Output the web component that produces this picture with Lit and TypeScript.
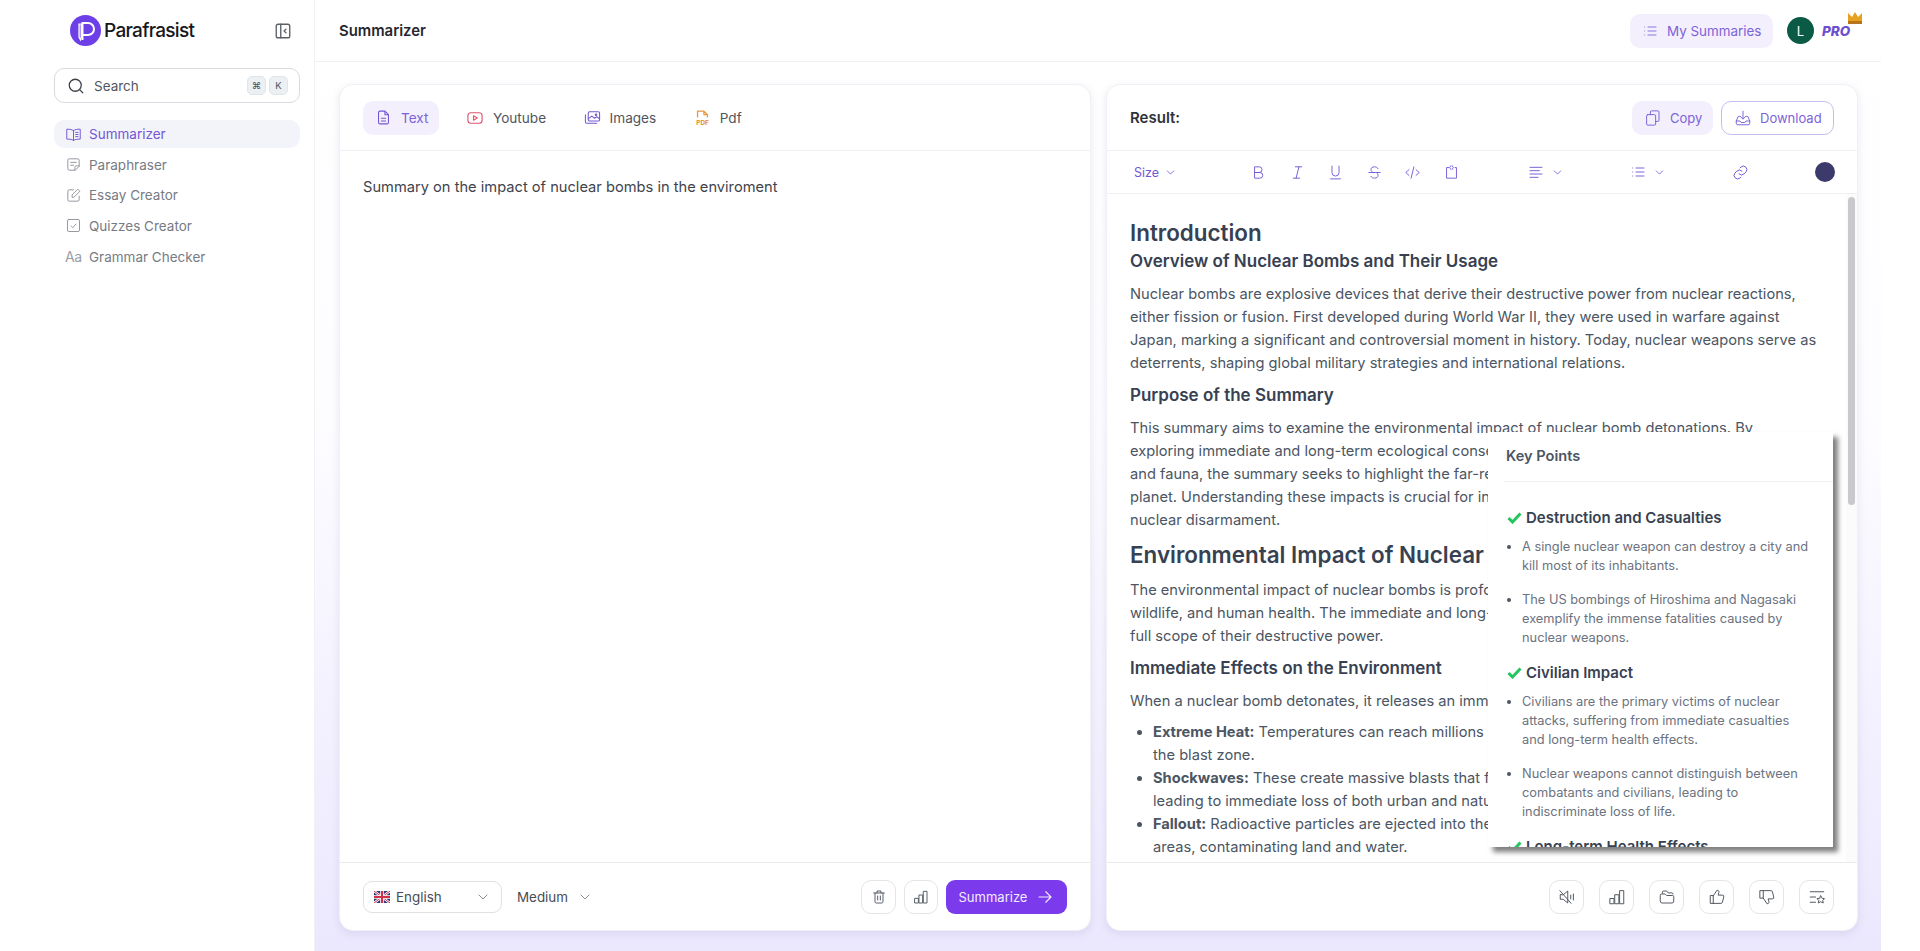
import { LitElement, html, css, svg } from "lit";
import { customElement, state } from "lit/decorators.js";

// all line icons share one 24x24 stroke box
const ico = (body: unknown, size = 16, sw = 1.5) => html`<svg class="ico" width=${size} height=${size} viewBox="0 0 24 24" fill="none" stroke="currentColor" stroke-width=${sw} stroke-linecap="round" stroke-linejoin="round">${body}</svg>`;

const icons = {
  panel: svg`<rect x="3" y="3" width="18" height="18" rx="2.5"/><path d="M9 3v18M16 9.5 13.5 12l2.5 2.5"/>`,
  search: svg`<circle cx="11" cy="11" r="8"/><path d="m21 21-4.2-4.2"/>`,
  book: svg`<path d="M12 6.5C10 5 7 4.5 2.5 4.5v14c4.500 0 7.500.5 9.500 2 2-1.500 5-2 9.500-2v-14C17 4.500 14 5 12 6.500zM12 6.500v14M15 9h3.500M15 12h3.500M15 15h3.500"/>`,
  note: svg`<path d="M20 14V6a2 2 0 0 0-2-2H6a2 2 0 0 0-2 2v12a2 2 0 0 0 2 2h8zM14 20v-4a2 2 0 0 1 2-2h4M8 9h8M8 13h4"/>`,
  edit: svg`<path d="M20 13v5a2 2 0 0 1-2 2H6a2 2 0 0 1-2-2V6a2 2 0 0 1 2-2h6M10 14v-3l8-8 3 3-8 8z"/>`,
  check: svg`<rect x="3.500" y="3.500" width="17" height="17" rx="2"/><path d="m8.500 12.500 2.500 2.500 4.500-5"/>`,
  list: svg`<path d="M9 6h12M9 12h12M9 18h12M4 6h.01M4 12h.01M4 18h.01"/>`,
  doc: svg`<path d="M14 3H7a2 2 0 0 0-2 2v14a2 2 0 0 0 2 2h10a2 2 0 0 0 2-2V8zM14 3v5h5M9 13h6M9 17h6"/>`,
  video: svg`<rect x="2.500" y="5" width="19" height="14" rx="4"/><path d="m10 9 5 3-5 3z"/>`,
  image: svg`<rect x="6" y="4" width="16" height="13" rx="2"/><path d="M2 8v10a2 2 0 0 0 2 2h14M6 14l5-4 4 3 3-2 4 3"/><circle cx="17" cy="8" r="1"/>`,
  copy: svg`<rect x="3.500" y="7.500" width="12" height="14" rx="1.500"/><path d="M8.500 7.500V4a1.500 1.500 0 0 1 1.500-1.500h8.500A1.500 1.500 0 0 1 20 4v11a1.500 1.500 0 0 1-1.500 1.500h-3"/>`,
  download: svg`<path d="M12 3v10M8 9.500l4 4 4-4M7 10H5.500L3 16v3a2 2 0 0 0 2 2h14a2 2 0 0 0 2-2v-3l-2.500-6H17M3 16h5l1.500 2h5l1.500-2h5"/>`,
  bold: svg`<path d="M7 4h6a4 4 0 0 1 0 8H7zM7 12h7a4 4 0 0 1 0 8H7z"/>`,
  italic: svg`<path d="M9 4h9M6 20h9M14 4l-4 16"/>`,
  underline: svg`<path d="M7 3v9a5 5 0 0 0 10 0V3M5 21h14"/>`,
  strike: svg`<path d="M4 12h16M17 6.500C16 4.800 14.300 4 12 4 9 4 7 5.500 7 8c0 1.500.8 3 3 4M7 17.500C8 19.200 9.700 20 12 20c3 0 5-1.500 5-4 0-1.200-.4-2.500-1.500-3.500"/>`,
  code: svg`<path d="m7 8-4.500 4L7 16M17 8l4.500 4-4.500 4M14 4l-4 16"/>`,
  block: svg`<path d="M8 5H5v15h14V5h-2M11 2.500 9.500 5 11 7.500M13 2.500 14.500 5 13 7.500"/>`,
  align: svg`<path d="M3 5h18M3 10h14M3 15h18M3 20h12"/>`,
  link: svg`<path d="M10 14a5 5 0 0 0 7 0l3-3a5 5 0 0 0-7-7l-1.500 1.500M14 10a5 5 0 0 0-7 0l-3 3a5 5 0 0 0 7 7l1.500-1.500"/>`,
  trash: svg`<path d="M4 6h16M9 6V3h6v3M6 6v13a2 2 0 0 0 2 2h8a2 2 0 0 0 2-2V6M10 10.500v6M14 10.500v6"/>`,
  chart: svg`<rect x="3" y="14" width="5" height="7"/><rect x="9.500" y="9" width="5" height="12"/><rect x="16" y="3.500" width="5" height="17.500"/>`,
  arrow: svg`<path d="M4 12h16M13 5l7 7-7 7"/>`,
  chev: svg`<path d="m6 9 6 6 6-6"/>`,
  mute: svg`<path d="M3 9v6h4l6 5V4L7 9zM2.500 3.500l15 17M17 9.500v5M20.500 8v8"/>`,
  folder: svg`<path d="M6 7V5.500A1.500 1.500 0 0 1 7.500 4h4l2 2.500h5A1.500 1.500 0 0 1 20 8M3 9.500A1.500 1.500 0 0 1 4.500 8h5l2 2h8A1.500 1.500 0 0 1 21 11.500v6A2.500 2.500 0 0 1 18.500 20h-13A2.500 2.500 0 0 1 3 17.500z"/>`,
  up: svg`<path d="M7 10.500v10H3v-10zM7 10.500 12 3c2 0 3 1.200 2.500 3l-1 3.500H19a2 2 0 0 1 2 2.500l-1.800 7a2 2 0 0 1-2 1.500H7"/>`,
  down: svg`<path d="M3 3.500h4v10H3zM7 13.500 12 21c2 0 3-1.200 2.500-3l-1-3.500H19a2 2 0 0 0 2-2.500l-1.800-7a2 2 0 0 0-2-1.500H7"/>`,
  star: svg`<path d="M3 5h18M3 12h7M3 19h7M17 10.500l1.800 3.200 3.200.5-2.300 2.300.6 3.500-3.300-1.700-3.300 1.700.6-3.500-2.300-2.300 3.200-.5z"/>`,
};

const navItems = [
  { label: "Summarizer", icon: icons.book, active: true },
  { label: "Paraphraser", icon: icons.note },
  { label: "Essay Creator", icon: icons.edit },
  { label: "Quizzes Creator", icon: icons.check },
  { label: "Grammar Checker", icon: null },
];

const keyPoints = [
  {
    title: "Destruction and Casualties",
    items: [
      "A single nuclear weapon can destroy a city and kill most of its inhabitants.",
      "The US bombings of Hiroshima and Nagasaki exemplify the immense fatalities caused by nuclear weapons.",
    ],
  },
  {
    title: "Civilian Impact",
    items: [
      "Civilians are the primary victims of nuclear attacks, suffering from immediate casualties and long-term health effects.",
      "Nuclear weapons cannot distinguish between combatants and civilians, leading to indiscriminate loss of life.",
    ],
  },
  {
    title: "Long-term Health Effects",
    items: ["Survivors face elevated rates of cancer and other illnesses for decades after exposure."],
  },
];

@customElement("app-root")
class AppRoot extends LitElement {
  @state()
  activeTab = "Text";

  private pdfIcon() {
    return html`<svg class="ico" width="17" height="17" viewBox="0 0 24 24" fill="none" stroke="currentColor" stroke-width="1.800" stroke-linejoin="round"><path d="M5 12V3h9l5 5v4M14 3v5h5"/><text x="12" y="22.500" text-anchor="middle" font-family="Inter" font-size="9" font-weight="800" fill="currentColor" stroke="none">PDF</text></svg>`;
  }

  private sidebar() {
    return html`
      <aside class="sidebar">
        <div class="brand">
          <span class="logo">
            <svg width="30" height="30" viewBox="0 0 30 30" fill="none" stroke="#fff" stroke-width="2"><path d="M11.500 24V7h5.500a6 6 0 0 1 0 12h-5.500"/><path d="M8 8v13l1.500 3 1-3V8z" stroke-width="1.200" fill="#fff" fill-opacity=".4"/></svg>
          </span>
          <span class="wordmark">Parafrasist</span>
          <span class="collapse">${ico(icons.panel, 18, 1.800)}</span>
        </div>
        <div class="search">
          ${ico(icons.search, 18, 1.700)}
          <span>Search</span>
          <kbd>⌘</kbd><kbd>K</kbd>
        </div>
        <nav>
          ${navItems.map((n) => html`
            <a class=${n.active ? "active" : ""}>
              ${n.icon ? ico(n.icon, 17, 1.300) : html`<span class="aa">Aa</span>`}
              ${n.label}
            </a>`)}
        </nav>
      </aside>`;
  }

  private leftCard() {
    const tabs = [
      { label: "Text", icon: ico(icons.doc, 17), cls: "c-purple" },
      { label: "Youtube", icon: ico(icons.video, 18), cls: "c-red" },
      { label: "Images", icon: ico(icons.image, 17), cls: "c-purple" },
      { label: "Pdf", icon: this.pdfIcon(), cls: "c-orange" },
    ];
    return html`
      <section class="card">
        <div class="tabs">
          ${tabs.map((t) => html`
            <button class="tab ${this.activeTab === t.label ? "on" : ""}" @click=${() => (this.activeTab = t.label)}>
              <span class=${t.cls}>${t.icon}</span>${t.label}
            </button>`)}
        </div>
        <div class="input">Summary on the impact of nuclear bombs in the enviroment</div>
        <div class="foot">
          <div class="select">
            <svg width="16" height="12" viewBox="0 0 16 12"><rect width="16" height="12" rx="1.500" fill="#2b3a78"/><path d="M0 0l16 12M16 0 0 12" stroke="#fff" stroke-width="2.400"/><path d="M0 0l16 12M16 0 0 12" stroke="#d0304a" stroke-width="1"/><path d="M8 0v12M0 6h16" stroke="#fff" stroke-width="3.600"/><path d="M8 0v12M0 6h16" stroke="#d0304a" stroke-width="2"/></svg>
            English
            <span class="grow"></span>
            <span class="chev-grey">${ico(icons.chev, 16)}</span>
          </div>
          <div class="medium">Medium <span class="chev-grey">${ico(icons.chev, 16)}</span></div>
          <span class="grow"></span>
          <button class="sq">${ico(icons.trash, 16, 1.400)}</button>
          <button class="sq narrow">${ico(icons.chart, 16, 1.400)}</button>
          <button class="primary">Summarize ${ico(icons.arrow, 18)}</button>
        </div>
      </section>`;
  }

  private toolbar() {
    return html`
      <div class="toolbar">
        <span class="size">Size ${ico(icons.chev, 13)}</span>
        <div class="marks">
          ${[icons.bold, icons.italic, icons.underline, icons.strike, icons.code, icons.block].map((i) => ico(i, 17, 1.300))}
        </div>
        <span class="drop align">${ico(icons.align, 16, 1.400)}${ico(icons.chev, 13)}</span>
        <span class="drop lists">${ico(icons.list, 16, 1.400)}${ico(icons.chev, 13)}</span>
        <span class="linkic">${ico(icons.link, 17, 1.400)}</span>
        <span class="grow"></span>
        <span class="swatch"></span>
      </div>`;
  }

  private document() {
    return html`
      <div class="doc">
        <h1>Introduction</h1>
        <h3>Overview of Nuclear Bombs and Their Usage</h3>
        <p>Nuclear bombs are explosive devices that derive their destructive power from nuclear reactions, either fission or fusion. First developed during World War II, they were used in warfare against Japan, marking a significant and controversial moment in history. Today, nuclear weapons serve as deterrents, shaping global military strategies and international relations.</p>
        <h3>Purpose of the Summary</h3>
        <p>This summary aims to examine the environmental impact of nuclear bomb detonations. By exploring immediate and long-term ecological consequences, including effects on air, water, flora and fauna, the summary seeks to highlight the far-reaching implications of nuclear weapons on the planet. Understanding these impacts is crucial for informing policy decisions and advocating for nuclear disarmament.</p>
        <h1>Environmental Impact of Nuclear Bombs</h1>
        <p>The environmental impact of nuclear bombs is profound, affecting ecosystems, air and water, wildlife, and human health. The immediate and long-term effects must be understood to grasp the full scope of their destructive power.</p>
        <h3>Immediate Effects on the Environment</h3>
        <p>When a nuclear bomb detonates, it releases an immense amount of energy in seconds.</p>
        <ul>
          <li><b>Extreme Heat:</b> Temperatures can reach millions of degrees, incinerating everything within<br />the blast zone.</li>
          <li><b>Shockwaves:</b> These create massive blasts that flatten structures and uproot vegetation,<br />leading to immediate loss of both urban and natural habitats.</li>
          <li><b>Fallout:</b> Radioactive particles are ejected into the atmosphere and settle over vast<br />areas, contaminating land and water.</li>
        </ul>
      </div>
      <div class="scrollbar"><div class="thumb"></div></div>`;
  }

  private keyPointsPanel() {
    return html`
      <div class="points">
        <div class="points-head">Key Points</div>
        <div class="points-body">
          ${keyPoints.map((k) => html`
            <h4><svg width="15" height="12" viewBox="0 0 15 12" fill="none" stroke="#22c55e" stroke-width="3"><path d="m1.500 6 4 4 8-8.500"/></svg>${k.title}</h4>
            <ul>${k.items.map((i) => html`<li>${i}</li>`)}</ul>`)}
        </div>
      </div>`;
  }

  private rightCard() {
    return html`
      <section class="card result">
        <div class="result-head">
          <strong>Result:</strong>
          <span class="grow"></span>
          <button class="copy">${ico(icons.copy, 18, 1.300)}Copy</button>
          <button class="download">${ico(icons.download, 18, 1.300)}Download</button>
        </div>
        ${this.toolbar()}
        <div class="doc-wrap">${this.document()}</div>
        <div class="foot right">
          ${[icons.mute, icons.chart, icons.folder, icons.up, icons.down, icons.star].map((i) => html`<button class="sq">${ico(i, 18, 1.300)}</button>`)}
        </div>
        ${this.keyPointsPanel()}
      </section>`;
  }

  render() {
    return html`
      <div class="shell">
        ${this.sidebar()}
        <div class="main">
          <header>
            <span class="title">Summarizer</span>
            <span class="grow"></span>
            <button class="mine">${ico(icons.list, 16, 1.300)}My Summaries</button>
            <span class="avatar">L</span>
            <span class="pro">PRO
              <svg class="crown" width="16" height="12" viewBox="0 0 16 12"><path d="M1 1l4 4 3-5 3 5 4-4v11H1z" fill="#e6a11f"/><rect x="1" y="9" width="14" height="3" fill="#b8741a"/></svg>
            </span>
          </header>
          <div class="cards">
            ${this.leftCard()}
            ${this.rightCard()}
          </div>
        </div>
      </div>
    `;
  }

  static styles = css`
    :host {
      display: block;
      width: 1920px;
      height: 951px;
      background: #fff;
      font-family: Inter, "Liberation Sans", sans-serif;
      color: #4b5563;
      overflow: hidden;
    }

    button {
      all: unset;
      box-sizing: border-box;
      display: inline-flex;
      align-items: center;
      cursor: pointer;
    }

    .ico { display: block; flex: none; }
    .grow { flex: 1; }

    .shell {
      display: flex;
      width: 1881px;
      height: 951px;
    }

    /* sidebar */
    .sidebar {
      width: 315px;
      flex: none;
      box-sizing: border-box;
      border-right: 1px solid #f1f1f4;
      padding: 15px 14px 0 54px;
      background: #fff;
    }

    .brand {
      display: flex;
      align-items: center;
      height: 31px;
      padding-left: 16px;
    }

    .logo {
      width: 31px;
      height: 31px;
      border-radius: 50%;
      background: #6d3fe6;
      display: flex;
      align-items: center;
      justify-content: center;
      flex: none;
    }

    .wordmark {
      margin-left: 3px;
      font-size: 19px;
      font-weight: 500;
      letter-spacing: -0.7px;
      color: #17171c;
    }

    .collapse {
      margin-left: auto;
      margin-right: 8px;
      color: #5a6068;
    }

    .search {
      margin-top: 22px;
      height: 35px;
      width: 246px;
      box-sizing: border-box;
      border: 1px solid #d8dbdf;
      border-radius: 10px;
      display: flex;
      align-items: center;
      gap: 3px;
      padding: 0 11px 0 12px;
      font-size: 13.500px;
      color: #51565e;
    }

    .search span { margin-left: 6px; flex: 1; }
    .search .ico { color: #3d4249; }

    kbd {
      width: 19px;
      height: 19px;
      border-radius: 5px;
      background: #edf0f2;
      border: 1px solid #e1e5e8;
      box-sizing: border-box;
      font-family: Inter, sans-serif;
      font-size: 9.500px;
      display: flex;
      align-items: center;
      justify-content: center;
      color: #4b5563;
    }

    nav {
      margin-top: 17px;
      width: 246px;
      display: flex;
      flex-direction: column;
      gap: 2.670px;
    }

    nav a {
      height: 28px;
      display: flex;
      align-items: center;
      gap: 7px;
      padding-left: 11px;
      border-radius: 10px;
      font-size: 13.500px;
      color: #777b84;
    }

    nav a .ico { color: #8b8f97; }
    nav a.active { background: #f3f4f9; color: #7457d4; }
    nav a.active .ico { color: #6d4fd0; }
    .aa { width: 17px; font-size: 14px; color: #9a9ea5; letter-spacing: -0.5px; }

    /* main column */
    .main {
      flex: 1;
      display: flex;
      flex-direction: column;
      min-width: 0;
      background: linear-gradient(180deg, #fff 0%, #fdfcff 45%, #ebe8fe 100%);
    }

    header {
      height: 62px;
      flex: none;
      box-sizing: border-box;
      border-bottom: 1px solid #f1f1f4;
      display: flex;
      align-items: center;
      padding: 0 29px 0 24px;
      background: #fff;
    }

    .title { font-size: 14.900px; font-weight: 600; color: #27272f; }

    .mine {
      height: 34px;
      width: 143px;
      padding-left: 12px;
      gap: 9px;
      border-radius: 10px;
      background: #f3effd;
      color: #7c63d8;
      font-size: 13.400px;
    }

    .avatar {
      margin-left: 14px;
      width: 27px;
      height: 27px;
      border-radius: 50%;
      background: #0b5a45;
      color: #fff;
      font-size: 13px;
      display: flex;
      align-items: center;
      justify-content: center;
    }

    .pro {
      position: relative;
      margin-left: 8px;
      width: 30px;
      font-size: 13.500px;
      font-weight: 800;
      font-style: italic;
      color: #6d4fd0;
    }

    .crown { position: absolute; top: -11px; left: 25px; }

    .cards {
      flex: 1;
      display: flex;
      gap: 15px;
      padding: 22px 23px 20px 24px;
      min-height: 0;
    }

    .card {
      position: relative;
      flex: 1;
      min-width: 0;
      display: flex;
      flex-direction: column;
      background: #fff;
      border: 1px solid #f1f1f5;
      border-radius: 14px;
      box-shadow: 0 3px 8px rgba(60, 50, 120, 0.1);
      box-sizing: border-box;
      overflow: hidden;
    }

    /* left card */
    .tabs {
      height: 66px;
      flex: none;
      box-sizing: border-box;
      border-bottom: 1px solid #eff0f2;
      display: flex;
      align-items: center;
      gap: 14.500px;
      padding: 0 23px;
    }

    .tab {
      height: 34px;
      padding: 0 11px 0 12px;
      gap: 9px;
      border-radius: 10px;
      font-size: 13.600px;
      color: #4f555d;
    }

    .tab.on { background: #f3effd; color: #7c63d8; }
    .c-purple { color: #7457d4; }
    .c-red { color: #e0566f; }
    .c-orange { color: #e8973f; }

    .input {
      flex: 1;
      padding: 26px 23px;
      font-size: 14.670px;
      line-height: 20px;
      color: #3f444c;
    }

    .foot {
      height: 68px;
      flex: none;
      box-sizing: border-box;
      border-top: 1px solid #e9eaec;
      display: flex;
      align-items: center;
      padding: 0 23px;
      font-size: 13.400px;
      color: #474c54;
    }

    .select {
      width: 139px;
      height: 32px;
      box-sizing: border-box;
      border: 1px solid #dfe1e4;
      border-radius: 9px;
      display: flex;
      align-items: center;
      gap: 6px;
      padding: 0 10px;
    }

    .chev-grey { color: #8a8e95; }
    .medium { margin-left: 15px; display: flex; align-items: center; gap: 9px; }

    .sq {
      width: 35px;
      height: 34px;
      justify-content: center;
      border: 1px solid #e4e5e8;
      border-radius: 10px;
      color: #4f555d;
      background: #fff;
    }

    .sq.narrow { width: 34px; margin-left: 8px; }

    .primary {
      margin-left: 8px;
      width: 121px;
      height: 34px;
      justify-content: center;
      gap: 9px;
      border-radius: 9px;
      background: #7c3aed;
      color: #f2eaff;
      font-size: 13px;
    }

    /* right card */
    .result-head {
      height: 66px;
      flex: none;
      box-sizing: border-box;
      border-bottom: 1px solid #eff0f2;
      display: flex;
      align-items: center;
      padding: 0 23px;
    }

    .result-head strong { font-size: 15px; font-weight: 600; color: #2f3338; }

    .copy, .download {
      height: 34px;
      border-radius: 10px;
      font-size: 13px;
      color: #7c63d8;
      gap: 8px;
    }

    .copy { width: 81px; padding-left: 12px; background: #f3effd; }

    .download {
      width: 113px;
      margin-left: 8px;
      padding-left: 12px;
      border: 1px solid #c6bced;
    }

    .toolbar {
      height: 43px;
      flex: none;
      box-sizing: border-box;
      border-bottom: 1px solid #eff0f2;
      display: flex;
      align-items: center;
      padding: 0 22px 0 27px;
      color: #7457d4;
    }

    .size { display: flex; align-items: center; gap: 5px; font-size: 12.500px; width: 116px; }
    .marks { display: flex; gap: 21.500px; }
    .drop { display: flex; align-items: center; gap: 7px; }
    .align { margin-left: 68px; }
    .lists { margin-left: 66px; }
    .linkic { margin-left: 66px; }

    .swatch {
      width: 20px;
      height: 20px;
      border-radius: 50%;
      background: #3b3a6b;
    }

    .doc-wrap {
      flex: 1;
      min-height: 0;
      display: flex;
      overflow: hidden;
    }

    .doc {
      flex: 1;
      min-width: 0;
      padding: 25px 26px 0 23px;
      font-size: 14.670px;
      line-height: 23px;
      color: #4b5563;
    }

    .doc h1 {
      margin: 9px 0 2px;
      font-size: 22.400px;
      line-height: 28px;
      font-weight: 600;
      color: #374151;
    }

    .doc h1:first-child { margin-top: 0; }

    .doc h3 {
      margin: 0;
      font-size: 17px;
      line-height: 24px;
      font-weight: 600;
      color: #374151;
    }

    .doc p { margin: 10px 0 8px; }
    .doc ul { margin: 8px 0; padding-left: 23px; }
    .doc b { font-weight: 700; color: #4b5563; }

    .scrollbar {
      width: 11px;
      flex: none;
      padding-top: 3px;
      background: #fbfbfb;
    }

    .thumb {
      width: 7px;
      height: 308px;
      margin-left: 2px;
      border-radius: 4px;
      background: #c9c9cc;
    }

    .foot.right { justify-content: flex-end; gap: 15px; padding-right: 23px; }

    .points {
      position: absolute;
      top: 347px;
      right: 24px;
      width: 345px;
      height: 415px;
      display: flex;
      flex-direction: column;
      background: #fff;
      box-shadow: 5px 5px 5px rgba(40, 40, 40, 0.6);
    }

    .points-head {
      height: 50px;
      flex: none;
      box-sizing: border-box;
      margin-left: 16px;
      padding: 14px 0 0 2px;
      border-bottom: 1px solid #eff0f2;
      font-size: 14.600px;
      font-weight: 600;
      line-height: 20px;
      color: #4b5563;
    }

    .points-body {
      flex: 1;
      overflow: hidden;
      padding: 25px 23px 0 19px;
    }

    .points-body h4 {
      margin: 0;
      display: flex;
      align-items: center;
      gap: 4px;
      font-size: 15px;
      line-height: 22px;
      font-weight: 600;
      color: #374151;
    }

    .points-body ul {
      margin: 8px 0 15px;
      padding-left: 15px;
    }

    .points-body li {
      font-size: 12.800px;
      line-height: 19px;
      color: #6b7280;
      margin-bottom: 15px;
    }

    .points-body li::marker { color: #4b5563; }
    .points-body li:last-child { margin-bottom: 0; }
  `;
}
